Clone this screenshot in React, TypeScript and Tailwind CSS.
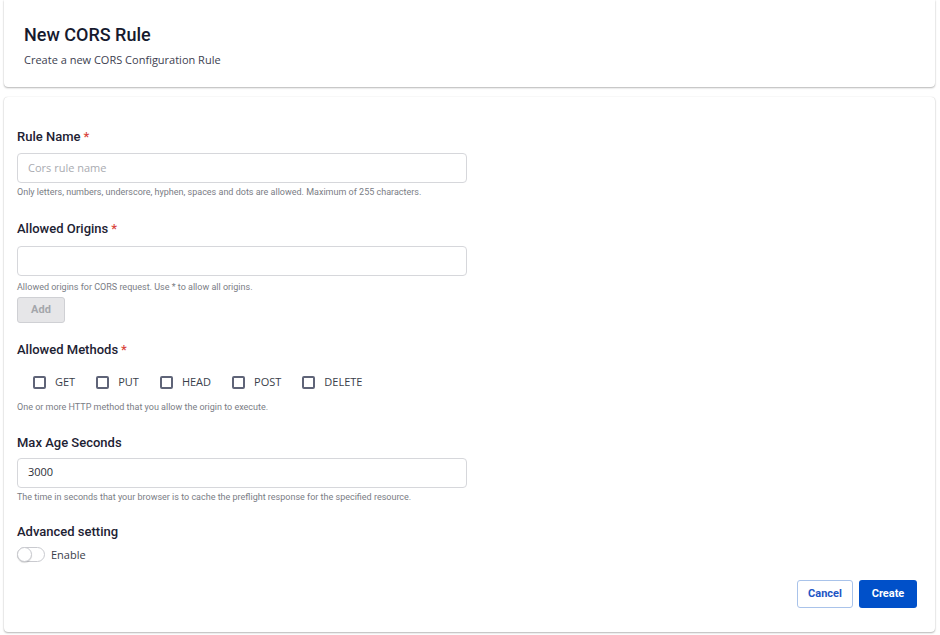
import React from "react";

const roboto = { fontFamily: "Roboto, 'Liberation Sans', sans-serif" };
const openSans = { fontFamily: "'Open Sans', 'Liberation Sans', sans-serif" };

function Label({ text, required }: { text: string; required?: boolean }) {
  return (
    <div className="text-[13px] leading-[18px] font-medium text-[#1d2233]" style={roboto}>
      {text}
      {required && <span className="text-[#d9463e] ml-[3px]">*</span>}
    </div>
  );
}

function Helper({ text }: { text: string }) {
  return (
    <div className="text-[9px] leading-[12px] text-[#7a7d85]" style={roboto}>
      {text}
    </div>
  );
}

function Field({ placeholder, value }: { placeholder?: string; value?: string }) {
  return (
    <div
      className="w-[450px] h-[30px] border border-[#d6d7db] rounded-[4px] bg-white flex items-center px-[10px] text-[11px]"
      style={openSans}
    >
      {value ? (
        <span className="text-[#2c2f38]">{value}</span>
      ) : (
        <span className="text-[#a9abb1]">{placeholder}</span>
      )}
    </div>
  );
}

function Check({ label }: { label: string }) {
  return (
    <div className="flex items-center">
      <span className="w-[13px] h-[13px] border-2 border-[#5f6478] rounded-[2px] bg-white" />
      <span className="ml-[9px] text-[11px] text-[#3a3e4a]" style={openSans}>
        {label}
      </span>
    </div>
  );
}

export default function App() {
  const methods = ["GET", "PUT", "HEAD", "POST", "DELETE"];

  return (
    <div className="w-[940px] h-[635px] bg-white px-[4px] pr-[5px] flex flex-col overflow-hidden">
      {/* page header */}
      <div className="h-[87px] bg-white rounded-b-[4px] shadow-[0_1px_2px_rgba(0,0,0,0.28),0_0_1px_rgba(0,0,0,0.18)] pl-[20px] pt-[24px]">
        <div className="text-[18px] leading-[22px] font-medium text-[#161a2e]" style={roboto}>
          New CORS Rule
        </div>
        <div className="mt-[7px] text-[11px] leading-[14px] text-[#3d4150]" style={openSans}>
          Create a new CORS Configuration Rule
        </div>
      </div>

      {/* form */}
      <div className="mt-[10px] h-[535px] bg-white rounded-[4px] shadow-[0_1px_2px_rgba(0,0,0,0.28),0_0_1px_rgba(0,0,0,0.18)] pl-[13px] pt-[31px] flex flex-col">
        <Label text="Rule Name" required />
        <div className="mt-[7px]">
          <Field placeholder="Cors rule name" />
        </div>
        <div className="mt-[3px]">
          <Helper text="Only letters, numbers, underscore, hyphen, spaces and dots are allowed. Maximum of 255 characters." />
        </div>

        <div className="mt-[22px]">
          <Label text="Allowed Origins" required />
        </div>
        <div className="mt-[8px]">
          <Field />
        </div>
        <div className="mt-[5px]">
          <Helper text="Allowed origins for CORS request. Use * to allow all origins." />
        </div>
        <div className="mt-[4px]">
          <div
            className="w-[48px] h-[26px] rounded-[3px] border border-[#cfd0d4] bg-[#e6e6e8] flex items-center justify-center text-[11px] font-bold text-[#a4a6ab]"
            style={roboto}
          >
            Add
          </div>
        </div>

        <div className="mt-[18px]">
          <Label text="Allowed Methods" required />
        </div>
        <div className="mt-[15px] pl-[16px] flex items-center gap-[21px]">
          {methods.map((m) => (
            <Check key={m} label={m} />
          ))}
        </div>
        <div className="mt-[10px]">
          <Helper text="One or more HTTP method that you allow the origin to execute." />
        </div>

        <div className="mt-[21px]">
          <Label text="Max Age Seconds" />
        </div>
        <div className="mt-[6px]">
          <Field value="3000" />
        </div>
        <div className="mt-[3px]">
          <Helper text="The time in seconds that your browser is to cache the preflight response for the specified resource." />
        </div>

        <div className="mt-[20px]">
          <Label text="Advanced setting" />
        </div>
        <div className="mt-[6px] flex items-center">
          <span className="relative w-[28px] h-[15px] rounded-full border border-[#c9cacf] bg-white">
            <span className="absolute left-[-1px] top-[-1px] w-[15px] h-[15px] rounded-full bg-white border border-[#c9cacf] shadow-[0_1px_1px_rgba(0,0,0,0.15)]" />
          </span>
          <span className="ml-[6px] text-[11px] text-[#3a3e4a]" style={openSans}>
            Enable
          </span>
        </div>

        <div className="flex-1" />
        <div className="flex justify-end pr-[18px] pb-[24px] gap-[6px]">
          <div
            className="w-[56px] h-[28px] rounded-[3px] border border-[#a9c3ea] bg-white flex items-center justify-center text-[11px] font-bold text-[#1d55c4]"
            style={roboto}
          >
            Cancel
          </div>
          <div
            className="w-[58px] h-[28px] rounded-[3px] bg-[#0050c9] flex items-center justify-center text-[11px] font-bold text-white"
            style={roboto}
          >
            Create
          </div>
        </div>
      </div>
    </div>
  );
}
